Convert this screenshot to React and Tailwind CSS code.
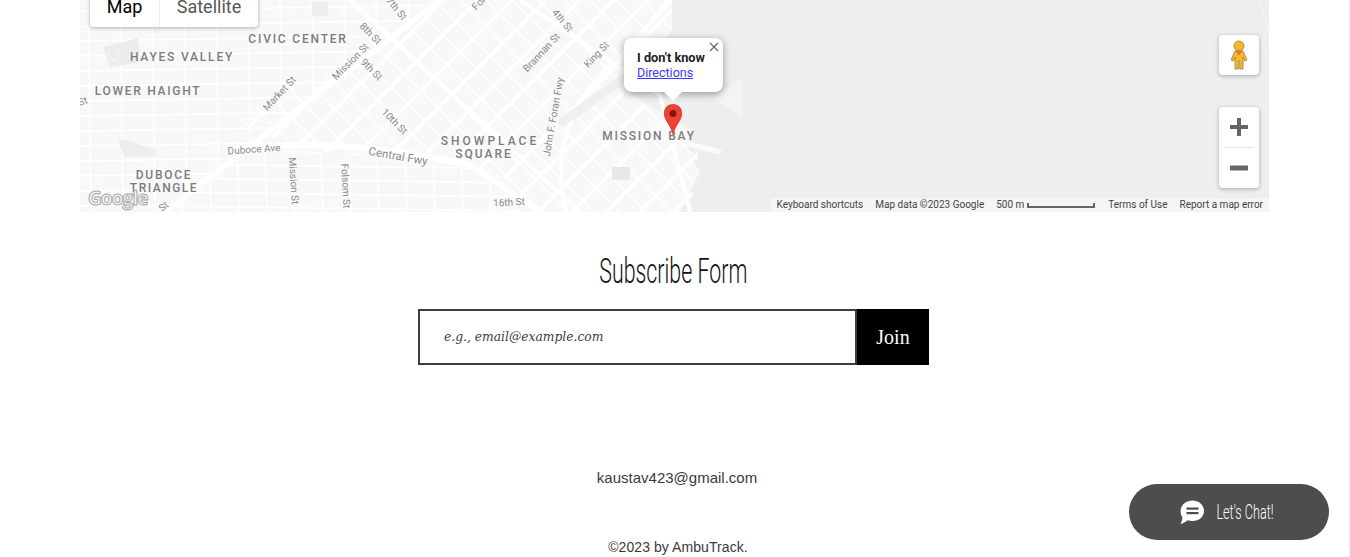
const range = (from, to, step) => {
  const out = []
  for (let v = from; v <= to; v += step) out.push(v)
  return out
}

const areaLabels = [
  ['CIVIC CENTER', 298, 43, 1.8], ['HAYES VALLEY', 182, 61, 1.8], ['LOWER HAIGHT', 148, 95, 1.7],
  ['DUBOCE', 164, 179, 1.7], ['TRIANGLE', 164, 192, 1.5], ['SHOWPLACE', 490, 145, 3],
  ['SQUARE', 484, 158, 2], ['MISSION BAY', 649, 140, 1.8],
]

const streetLabels = [
  ['Market St', 280, 94, -47, 10], ['Mission St', 351, 62, -45, 10], ['8th St', 370, 34, 45, 10],
  ['9th St', 371, 70, 45, 10], ['10th St', 394, 122, 45, 10], ['7th St', 396, 9, 50, 10],
  ['Duboce Ave', 254, 150, -4, 10], ['Mission St', 293, 181, 86, 10], ['Folsom St', 345, 186, 87, 10],
  ['Central Fwy', 398, 157, 10, 11.5], ['Brannan St', 542, 53, -47, 10], ['4th St', 562, 21, 50, 10],
  ['King St', 597, 55, -47, 10], ['John F. Foran Fwy', 554, 117, -80, 10], ['16th St', 509, 203, -3, 10],
  ['St', 164, 207, -40, 10], ['St', 83, 102, -20, 10], ['Fol', 479, 4, -45, 10],
]

function MapDrawing(){
  return (
    <svg className="absolute inset-0" width="1189" height="212" viewBox="80 0 1189 212">
      <defs>
        <clipPath id="west"><polygon points="80,0 445,0 175,212 80,212" /></clipPath>
        <clipPath id="soma"><polygon points="445,0 672,0 672,30 620,90 700,140 690,212 520,212 500,170 300,150 235,120" /></clipPath>
        <clipPath id="south"><polygon points="170,212 235,140 300,150 500,170 520,212" /></clipPath>
      </defs>
      <rect x="80" y="0" width="1189" height="212" fill="#eeeeee" />
      <polygon points="80,0 672,0 672,30 625,90 690,130 687,150 700,172 680,212 80,212" fill="#f8f8f8" />
      <polygon points="712,98 742,78 743,118" fill="#f4f4f4" />
      <polygon points="640,128 722,150 720,155 640,134" fill="#fafafa" />

      <g clipPath="url(#west)" stroke="#ffffff" strokeWidth="1.5">
        {range(8, 212, 15).map(y => <line key={y} x1="80" y1={y + 3} x2="460" y2={y - 3} />)}
        {range(88, 440, 32).map(x => <line key={x} x1={x} y1="0" x2={x + 3} y2="212" />)}
      </g>
      <g clipPath="url(#soma)" stroke="#ffffff">
        {range(-40, 1100, 34).map(v => <line key={v} x1={v} y1="212" x2={v + 240} y2="-28" strokeWidth="3.5" />)}
        {range(-200, 800, 26).map(v => <line key={v} x1={v} y1="-10" x2={v + 240} y2="230" strokeWidth="1.6" />)}
      </g>
      <g clipPath="url(#south)" stroke="#ffffff" strokeWidth="1.5">
        {range(150, 212, 14).map(y => <line key={y} x1="170" y1={y} x2="530" y2={y + 5} />)}
        {range(180, 520, 28).map(x => <line key={x} x1={x} y1="130" x2={x + 3} y2="212" />)}
      </g>

      <g stroke="#ffffff" fill="none" strokeLinecap="round">
        <path d="M165 212 L440 0" strokeWidth="5" />
        <path d="M235 150 Q330 135 470 165 L540 212" strokeWidth="6" />
        <path d="M520 0 L660 95 L690 212" strokeWidth="4" />
        <path d="M350 0 L580 212" strokeWidth="4" />
        <path d="M566 212 Q545 130 610 65" strokeWidth="4" />
        <path d="M670 0 L610 70" strokeWidth="5" />
        <path d="M562 122 L622 80" stroke="#f0f0f0" strokeWidth="9" />
      </g>

      <polygon points="103,47 138,38 141,62 110,67" fill="#ececec" />
      <circle cx="114" cy="54" r="6" fill="none" stroke="#f8f8f8" />
      <polygon points="118,140 126,140 155,149 156,156 124,157" fill="#eeeeee" />
      <rect x="612" y="167" width="18" height="13" fill="#e8e8e8" />
      <rect x="312" y="2" width="16" height="14" fill="#ededed" />

      <g stroke="#f6f6f6" fill="none">
        <path d="M1090 0 L1269 110" />
        <path d="M1180 0 L1269 50" />
        <path d="M1260 0 L1269 34" />
        <path d="M720 42 L830 0" strokeDasharray="5 2" />
        <path d="M725 28 L790 0" strokeDasharray="5 2" />
      </g>

      <g fontFamily="Roboto, sans-serif" fontSize="12" fontWeight="500" fill="#7c7c7c" textAnchor="middle">
        {areaLabels.map(([text, x, y, spacing]) => <text key={text} x={x} y={y} letterSpacing={spacing}>{text}</text>)}
      </g>
      <g fontFamily="Roboto, sans-serif" fill="#8a8a8a" textAnchor="middle" dominantBaseline="middle">
        {streetLabels.map(([text, x, y, angle, size]) => (
          <text key={text + x} x={x} y={y} fontSize={size} transform={`rotate(${angle} ${x} ${y})`}>{text}</text>
        ))}
      </g>

      <text x="88" y="205" fontFamily="'Open Sans', sans-serif" fontSize="19" fontWeight="700" letterSpacing="-0.9" fill="#f4f4f4" stroke="#a8a8a8" strokeWidth="1">Google</text>
    </svg>
  )
}

function Attribution(){
  const chip = 'bg-[#f5f5f5]/90 px-[6px] h-[14px] leading-[14px]'
  return (
    <div className="absolute right-0 bottom-0 flex text-[10px] text-[#444] font-['Roboto',sans-serif] whitespace-nowrap">
      <span className={chip}>Keyboard shortcuts</span>
      <span className={chip}>Map data ©2023 Google</span>
      <span className={`${chip} flex items-center gap-[3px] pr-[7px]`}>
        500 m
        <span className="w-[68px] h-[5px] border-x-2 border-b-2 border-[#666]"></span>
      </span>
      <span className={chip}>Terms of Use</span>
      <span className={chip}>Report a map error</span>
    </div>
  )
}

function MapPopup(){
  return (
    <div className="absolute left-[544px] top-[38px] w-[99px] h-[54px] bg-white rounded-lg shadow-[0_2px_7px_1px_rgba(0,0,0,0.3)] pl-[13px] pt-[12px] font-['Roboto',sans-serif] leading-[15px]">
      <div className="font-bold text-[12.75px] text-[#222] whitespace-nowrap">I don't know</div>
      <div className="text-[12.5px] text-[#3a3aff] underline">Directions</div>
      <svg className="absolute right-[4px] top-[4px]" width="10" height="10" viewBox="0 0 10 10">
        <path d="M1 1 L9 9 M9 1 L1 9" stroke="#666" strokeWidth="1.1" />
      </svg>
      <div className="absolute left-[42px] top-[46px] w-[14px] h-[14px] bg-white rotate-45"></div>
    </div>
  )
}

function MapControls(){
  return (
    <>
      <div className="absolute left-[10px] top-[-13px] h-[40px] flex bg-white rounded-sm shadow-[0_1px_4px_rgba(0,0,0,0.3)] font-['Roboto',sans-serif] text-[18px] leading-[40px]">
        <div className="w-[70px] text-center text-black border-r border-[#eee]">Map</div>
        <div className="w-[98px] text-center text-[#565656]">Satellite</div>
      </div>

      <div className="absolute left-[1139px] top-[35px] w-[40px] h-[40px] bg-white rounded-sm shadow-[0_1px_4px_rgba(0,0,0,0.3)] flex items-center justify-center">
        <svg width="18" height="30" viewBox="0 0 18 30">
          <circle cx="9" cy="6" r="5" fill="#fdb62a" stroke="#8a7440" strokeWidth="0.7" />
          <path d="M5 11 H13 L17 20 L14.5 21 L13 17 V29 H9.7 V21 H8.3 V29 H5 V17 L3.5 21 L1 20 Z" fill="#fdb62a" stroke="#8a7440" strokeWidth="0.7" />
          <path d="M5.5 11 H12.5 L9 15.5 Z" fill="#e8762d" />
        </svg>
      </div>

      <div className="absolute left-[1139px] top-[107px] w-[40px] h-[81px] bg-white rounded-sm shadow-[0_1px_4px_rgba(0,0,0,0.3)] flex flex-col items-center">
        <div className="h-[40px] flex items-center justify-center">
          <svg width="18" height="18" viewBox="0 0 18 18"><path d="M7 0 H11 V7 H18 V11 H11 V18 H7 V11 H0 V7 H7 Z" fill="#666" /></svg>
        </div>
        <div className="w-[30px] h-px bg-[#e6e6e6]"></div>
        <div className="h-[40px] flex items-center justify-center">
          <svg width="18" height="18" viewBox="0 0 18 18"><rect x="0" y="6.5" width="18" height="5" fill="#666" /></svg>
        </div>
      </div>
    </>
  )
}

function MapPin(){
  return (
    <svg className="absolute left-[583px] top-[103px]" width="20" height="34" viewBox="0 0 20 34">
      <path d="M10 1 C4.6 1 0.8 5 0.8 10.4 C0.8 17.5 7.6 21.5 10 33 C12.4 21.5 19.2 17.5 19.2 10.4 C19.2 5 15.4 1 10 1 Z" fill="#ea4335" />
      <circle cx="10" cy="10.5" r="3.4" fill="#86130f" />
    </svg>
  )
}

function ChatIcon(){
  return (
    <svg width="24" height="24" viewBox="0 0 24 24">
      <path d="M12.5 0.5 C19 0.5 24 5 24 11 C24 17 19 21 12.5 21 C10.8 21 9.2 20.7 7.8 20.2 C5.5 22 3 23.3 0.5 24 C1.6 22 2.3 19.7 2.4 17.2 C1 15.5 0.6 13.3 0.6 11 C0.6 5 6 0.5 12.5 0.5 Z" fill="#ffffff" />
      <rect x="6.5" y="7.5" width="12" height="2.2" fill="#4d4d4d" />
      <rect x="6.5" y="12" width="12" height="2.2" fill="#4d4d4d" />
    </svg>
  )
}

export default function App(){
  return (
    <div className="relative w-[1350px] h-[557px] overflow-hidden bg-white border-r border-[#efefef]">
      <div className="px-[80px]">
        <div className="relative w-[1189px] h-[212px] overflow-hidden">
          <MapDrawing />
          <Attribution />
          <MapControls />
          <MapPopup />
          <MapPin />
        </div>
      </div>

      <div className="flex flex-col items-center w-[1347px]">
        <h2 className="mt-[37px] h-[46px] leading-[46px] text-[35px] font-light text-[#111] font-['Roboto',sans-serif] scale-x-[.61] whitespace-nowrap">Subscribe Form</h2>

        <form className="mt-[14px] flex w-[511px] h-[56px]">
          <div className="flex-1 border-2 border-[#3a3b4d] flex items-center pl-[24px] italic text-[12.3px] text-[#3a3b4d] font-['DejaVu_Serif',serif]">e.g., email@example.com</div>
          <div className="w-[72px] bg-black text-white flex items-center justify-center text-[20px] font-['Liberation_Serif',serif]">Join</div>
        </form>

        <p className="mt-[103px] ml-[7px] text-[15px] leading-[20px] text-[#3a3a3a] font-['Liberation_Sans',sans-serif]">kaustav423@gmail.com</p>
        <p className="mt-[49px] ml-[9px] text-[14px] tracking-[0.07px] leading-[20px] text-[#3a3a3a] font-['Liberation_Sans',sans-serif]">©2023 by AmbuTrack.</p>
      </div>

      <div className="absolute left-[1129px] top-[484px] w-[200px] h-[56px] rounded-full bg-[#4d4d4d] flex items-center pl-[51px]">
        <ChatIcon />
        <span className="ml-[-9px] mt-[2px] w-[100px] text-center text-white text-[21px] font-light font-['Roboto',sans-serif] scale-x-[.6] whitespace-nowrap">Let's Chat!</span>
      </div>
    </div>
  )
}
